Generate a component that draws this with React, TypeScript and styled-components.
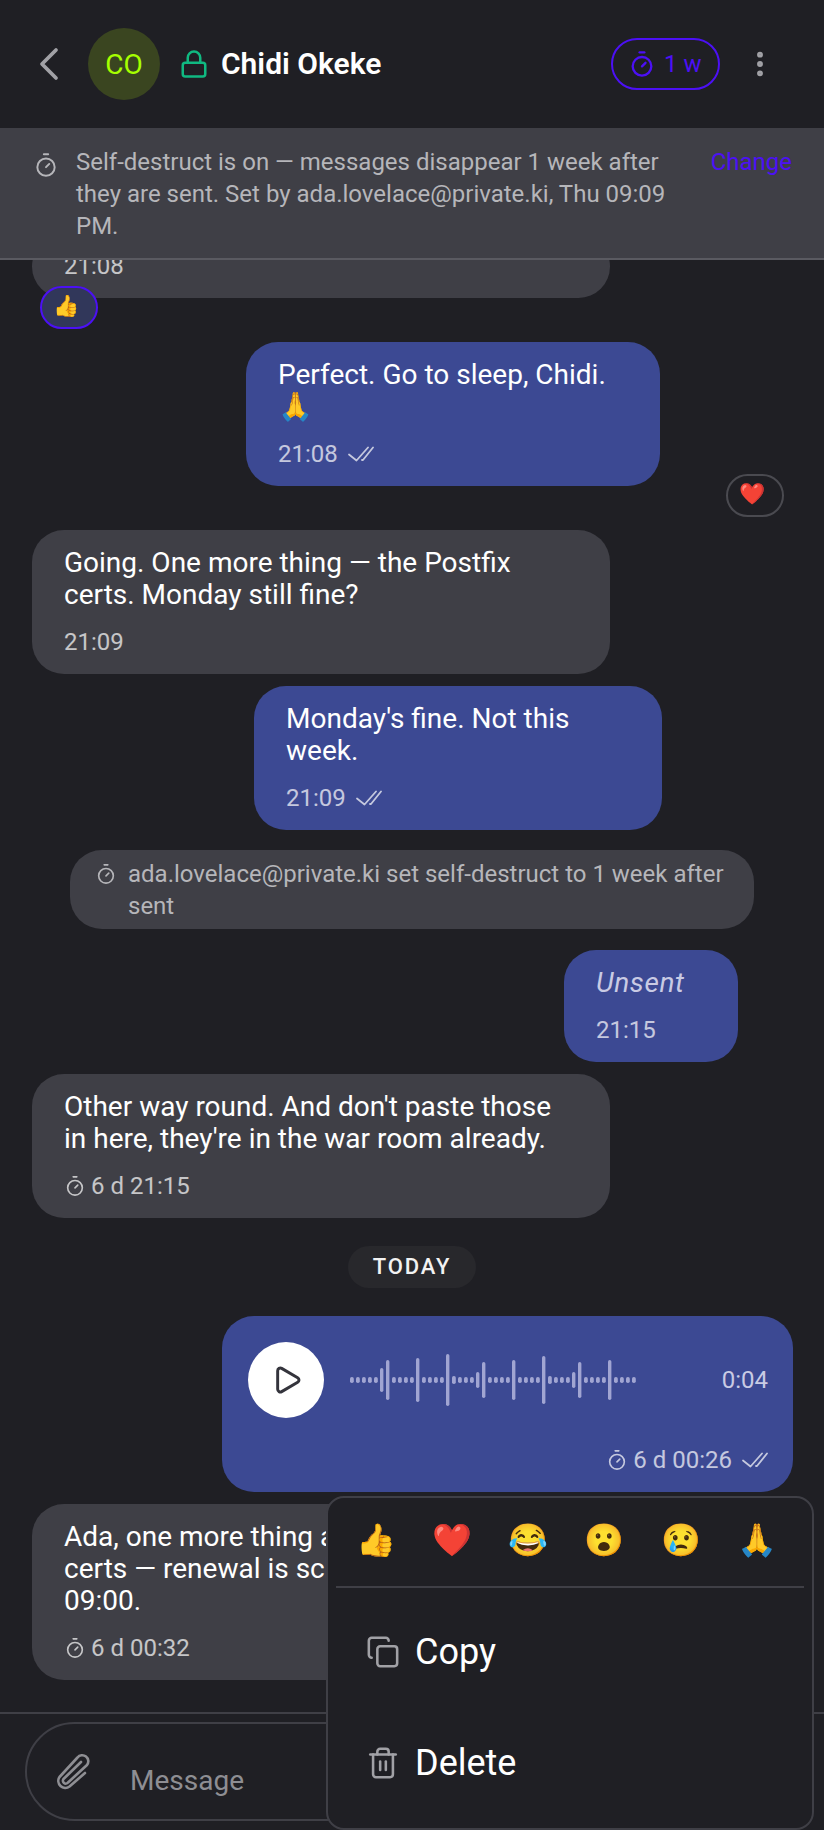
import styled, { createGlobalStyle } from 'styled-components';
import { ChevronLeft, Copy, EllipsisVertical, Lock, Play, Timer, Trash2 } from 'lucide-react';

const ACCENT = '#4c10f5';
const QUICK_REACTIONS = ['👍', '❤️', '😂', '😮', '😢', '🙏'];

// heights of the voice note bars, one every 6px
const WAVE = [
  6, 6, 6, 6, 6, 24, 40, 6, 6, 6, 6, 44, 6, 6, 6, 6, 52, 8, 6, 6, 6, 16, 36, 6, 6, 6, 6, 40, 6, 6, 6, 6, 48, 8, 6, 6, 6,
  16, 36, 6, 6, 6, 6, 40, 6, 6, 6, 6,
];

function DoubleCheck() {
  return (
    <CheckMark width="26" height="16" viewBox="0 0 26 16" fill="none" stroke="currentColor" strokeWidth="1.8" strokeLinecap="round" strokeLinejoin="round">
      <path d="M1 8.5 8.5 14.5 20 1.5" />
      <path d="M14 14 15 14 25 1.5" />
    </CheckMark>
  );
}

function Waveform() {
  return (
    <svg width="290" height="56" viewBox="0 0 290 56" fill="#a1a5d2">
      {WAVE.map((h, i) => (
        <rect key={i} x={i * 6} y={28 - h / 2} width={h > 8 ? 3.4 : 3.8} height={h} rx="1.8" />
      ))}
    </svg>
  );
}

function ClipGlyph() {
  return (
    <svg width="70" height="60" viewBox="0 0 70 60" fill="none" stroke="currentColor" strokeWidth="2.6" strokeLinecap="round" strokeLinejoin="round">
      <path d="M45 33 29.5 46.5A7 7 0 0 1 19.5 37L37.5 17.5A5.5 5.5 0 0 1 47 25L28 42.5A2.6 2.6 0 0 1 23.5 39L41 22" />
    </svg>
  );
}

export default function App() {
  return (
    <Screen>
      <GlobalStyle />
      <Header>
        <BackButton>
          <ChevronLeft size={56} strokeWidth={1.6} />
        </BackButton>
        <Avatar>CO</Avatar>
        <LockIcon>
          <Lock size={30} strokeWidth={2} />
        </LockIcon>
        <Name>Chidi Okeke</Name>
        <TimerChip>
          <Timer size={28} strokeWidth={2} />
          <span>1 w</span>
        </TimerChip>
        <MoreButton>
          <EllipsisVertical size={32} strokeWidth={2.4} />
        </MoreButton>
      </Header>

      <Banner>
        <BannerIcon>
          <Timer size={26} strokeWidth={1.8} />
        </BannerIcon>
        <BannerText>Self-destruct is on — messages disappear 1 week after they are sent. Set by ada.lovelace@private.ki, Thu 09:09 PM.</BannerText>
        <ChangeLink>Change</ChangeLink>
      </Banner>

      <Thread>
        <ClippedBubble>
          <Meta>21:08</Meta>
        </ClippedBubble>
        <Reaction $mine>👍</Reaction>

        <OutBubble $width={414} $inset={132} $top={13}>
          <Body>Perfect. Go to sleep, Chidi. 🙏</Body>
          <Meta>
            21:08
            <DoubleCheck />
          </Meta>
        </OutBubble>
        <Reaction $right>❤️</Reaction>

        <InBubble $top={13}>
          <Body>Going. One more thing — the Postfix certs. Monday still fine?</Body>
          <Meta>21:09</Meta>
        </InBubble>

        <OutBubble $width={408} $inset={130} $top={12}>
          <Body>Monday's fine. Not this week.</Body>
          <Meta>
            21:09
            <DoubleCheck />
          </Meta>
        </OutBubble>

        <SystemNote>
          <SystemIcon>
            <Timer size={22} strokeWidth={1.8} />
          </SystemIcon>
          <span>ada.lovelace@private.ki set self-destruct to 1 week after sent</span>
        </SystemNote>

        <OutBubble $width={174} $inset={54} $top={21}>
          <Unsent>Unsent</Unsent>
          <Meta>21:15</Meta>
        </OutBubble>

        <InBubble $top={12}>
          <Body>Other way round. And don't paste those in here, they're in the war room already.</Body>
          <Meta>
            <Timer size={22} strokeWidth={1.8} />6 d 21:15
          </Meta>
        </InBubble>

        <DayChip>TODAY</DayChip>

        <VoiceBubble>
          <VoiceRow>
            <PlayButton>
              <Play size={32} strokeWidth={2.2} />
            </PlayButton>
            <Waveform />
            <Duration>0:04</Duration>
          </VoiceRow>
          <VoiceMeta>
            <Timer size={22} strokeWidth={1.8} />6 d 00:26
            <DoubleCheck />
          </VoiceMeta>
        </VoiceBubble>

        <InBubble $top={12}>
          <Body>Ada, one more thing about the Postfix certs — renewal is scheduled for Monday 09:00.</Body>
          <Meta>
            <Timer size={22} strokeWidth={1.8} />6 d 00:32
          </Meta>
        </InBubble>
      </Thread>

      <Composer>
        <InputPill>
          <ClipIcon>
            <ClipGlyph />
          </ClipIcon>
          <Placeholder>Message</Placeholder>
        </InputPill>
      </Composer>

      <ContextMenu>
        <EmojiRow>
          {QUICK_REACTIONS.map((e) => (
            <EmojiCell key={e}>{e}</EmojiCell>
          ))}
        </EmojiRow>
        <MenuList>
          <MenuItem>
            <Copy size={34} strokeWidth={1.8} />
            <span>Copy</span>
          </MenuItem>
          <MenuItem>
            <Trash2 size={34} strokeWidth={1.8} />
            <span>Delete</span>
          </MenuItem>
        </MenuList>
      </ContextMenu>
    </Screen>
  );
}

const GlobalStyle = createGlobalStyle`
  html, body {
    margin: 0;
    background: #1f1f24;
  }
  * {
    box-sizing: border-box;
  }
`;

const Screen = styled.div`
  position: relative;
  display: flex;
  flex-direction: column;
  width: 824px;
  height: 1830px;
  overflow: hidden;
  background: #1f1f24;
  color: #fff;
  font-family: Roboto, 'Noto Color Emoji', sans-serif;
`;

const Header = styled.header`
  display: flex;
  align-items: center;
  flex: none;
  height: 128px;
  padding: 0 48px 0 21px;
`;

const BackButton = styled.div`
  display: flex;
  width: 56px;
  color: #a1a1a6;
`;

const Avatar = styled.div`
  display: flex;
  align-items: center;
  justify-content: center;
  width: 72px;
  height: 72px;
  margin-left: 11px;
  border-radius: 50%;
  background: #3a4520;
  color: #a6ff00;
  font-size: 28px;
`;

const LockIcon = styled.div`
  display: flex;
  margin-left: 19px;
  color: #10b981;
`;

const Name = styled.div`
  margin-left: 12px;
  margin-bottom: 2px;
  font-size: 30px;
  font-weight: 600;
`;

const TimerChip = styled.div`
  display: flex;
  align-items: center;
  gap: 8px;
  width: 109px;
  height: 52px;
  margin-left: auto;
  padding-left: 15px;
  border: 2px solid ${ACCENT};
  border-radius: 26px;
  color: ${ACCENT};
  font-size: 24px;
`;

const MoreButton = styled.div`
  display: flex;
  margin-left: 24px;
  color: #a1a1a6;
`;

const Banner = styled.div`
  display: flex;
  flex: none;
  height: 132px;
  padding: 18px 32px 0 33px;
  background: #3f3f46;
  border-bottom: 2px solid #5a5a61;
  font-size: 24px;
  line-height: 32px;
  color: #b6b6ba;
`;

const BannerIcon = styled.div`
  display: flex;
  flex: none;
  width: 43px;
  padding-top: 6px;
`;

const BannerText = styled.div`
  width: 620px;
`;

const ChangeLink = styled.div`
  margin-left: auto;
  color: ${ACCENT};
`;

const Thread = styled.div`
  display: flex;
  flex-direction: column;
  flex: 1;
  min-height: 0;
  overflow: hidden;
  padding: 0 32px;
`;

const InBubble = styled.div<{ $top: number }>`
  flex: none;
  width: 578px;
  margin-top: ${(p) => p.$top}px;
  padding: 17px 32px 16px;
  border-radius: 32px;
  background: #3f3f46;
  color: #fff;
`;

const ClippedBubble = styled(InBubble).attrs({ $top: -25 })`
  height: 63px;
  padding-top: 15px;
`;

const OutBubble = styled.div<{ $width: number; $inset: number; $top: number }>`
  flex: none;
  align-self: flex-end;
  width: ${(p) => p.$width}px;
  margin-top: ${(p) => p.$top}px;
  margin-right: ${(p) => p.$inset}px;
  padding: 17px 32px 16px;
  border-radius: 32px;
  background: #3c4993;
  color: #fff;
`;

const Body = styled.div`
  font-size: 28px;
  line-height: 32px;
  margin-bottom: 15px;
`;

const Unsent = styled(Body)`
  font-style: italic;
  letter-spacing: 0.6px;
  color: #c9cbe4;
`;

const Meta = styled.div`
  display: flex;
  align-items: center;
  gap: 5px;
  height: 32px;
  font-size: 24px;
  line-height: 32px;
  opacity: 0.7;
  white-space: pre;
`;

const CheckMark = styled.svg`
  margin-left: 5px;
`;

const Reaction = styled.div<{ $mine?: boolean; $right?: boolean }>`
  display: flex;
  align-items: center;
  justify-content: center;
  flex: none;
  align-self: ${(p) => (p.$right ? 'flex-end' : 'flex-start')};
  width: 58px;
  height: 43px;
  margin-top: -12px;
  margin-left: ${(p) => (p.$right ? '0' : '8px')};
  margin-right: ${(p) => (p.$right ? '8px' : '0')};
  padding: 0 5px 3px 0;
  border: 2px solid ${(p) => (p.$mine ? ACCENT : '#4a4a50')};
  border-radius: 22px;
  background: ${(p) => (p.$mine ? '#31375a' : '#1f1f24')};
  font-size: 21px;
`;

const SystemNote = styled.div`
  display: flex;
  flex: none;
  align-self: center;
  width: 684px;
  height: 79px;
  margin-top: 20px;
  padding: 8px 30px 0 25px;
  border-radius: 32px;
  background: #3f3f46;
  color: #b6b6ba;
  font-size: 24px;
  line-height: 32px;
`;

const SystemIcon = styled.div`
  display: flex;
  flex: none;
  width: 33px;
  padding-top: 5px;
`;

const DayChip = styled.div`
  flex: none;
  align-self: center;
  margin-top: 28px;
  width: 128px;
  height: 42px;
  border-radius: 21px;
  background: #28282c;
  font-size: 22px;
  font-weight: 500;
  letter-spacing: 1.9px;
  line-height: 42px;
  text-align: center;
  color: #f2f2f2;
`;

const VoiceBubble = styled.div`
  display: flex;
  flex-direction: column;
  flex: none;
  align-self: flex-end;
  width: 571px;
  height: 176px;
  margin-top: 28px;
  margin-right: -1px;
  padding: 26px 25px 0 26px;
  border-radius: 32px;
  background: #3c4993;
`;

const VoiceRow = styled.div`
  display: flex;
  align-items: center;
`;

const PlayButton = styled.div`
  display: flex;
  align-items: center;
  justify-content: center;
  flex: none;
  width: 76px;
  height: 76px;
  margin-right: 26px;
  padding-left: 2px;
  border-radius: 50%;
  background: #fff;
  color: #34343c;
`;

const Duration = styled.div`
  margin-left: auto;
  font-size: 24px;
  color: #c9cbe4;
`;

const VoiceMeta = styled(Meta)`
  justify-content: flex-end;
  margin-top: 26px;
  color: #fff;
`;

const Composer = styled.div`
  flex: none;
  height: 118px;
  padding: 8px 24px 9px 25px;
  border-top: 2px solid #3f3f46;
`;

const InputPill = styled.div`
  display: flex;
  height: 99px;
  padding: 16px 0 0 13px;
  border: 2px solid #3f3f46;
  border-radius: 50px;
  color: #8e8e93;
`;

const ClipIcon = styled.div`
  display: flex;
  flex: none;
  width: 90px;
`;

const Placeholder = styled.div`
  padding-top: 25px;
  font-size: 28px;
  line-height: 32px;
`;

const ContextMenu = styled.div`
  position: absolute;
  left: 326px;
  top: 1496px;
  width: 488px;
  height: 334px;
  padding: 0 8px;
  border: 2px solid #3f3f46;
  border-radius: 18px;
  background: #1f1f24;
`;

const EmojiRow = styled.div`
  display: grid;
  grid-template-columns: repeat(6, 76.2px);
  height: 90px;
  padding: 20px 0 0 2px;
  border-bottom: 2px solid #3f3f46;
`;

const EmojiCell = styled.div`
  text-align: center;
  font-size: 32px;
  line-height: 44px;
`;

const MenuList = styled.div`
  padding-top: 8px;
`;

const MenuItem = styled.div`
  display: flex;
  align-items: center;
  gap: 15px;
  height: 111px;
  padding-left: 30px;
  color: #a1a1a6;
  font-size: 36px;
  span {
    color: #fff;
  }
`;
